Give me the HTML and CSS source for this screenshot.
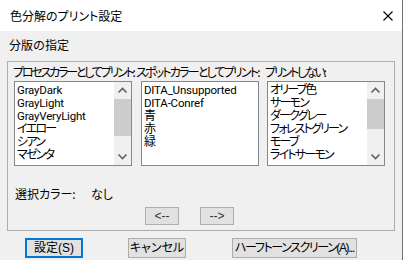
FILE: index.html
```html
<!DOCTYPE html>
<html lang="ja">
<head>
    <meta charset="UTF-8">
    <title>色分解のプリント設定</title>
    <link rel="stylesheet" href="styles.css">
</head>
<body>
    <div class="window">
        <div class="titleBar">
            <span class="title">色分解のプリント設定</span>
            <svg class="close" width="10" height="10" viewBox="0 0 10 10">
                <path d="M0.5 0.5 L9.5 9.5 M9.5 0.5 L0.5 9.5" stroke="#000" stroke-width="1.1" fill="none"/>
            </svg>
        </div>
        <div class="dialogBody">
            <div class="caption">分版の指定</div>
            <div class="groupBox">
                <div class="heads">
                    <span class="head1">プロセスカラーとしてプリント:</span>
                    <span class="head2">スポットカラーとしてプリント:</span>
                    <span class="head3">プリントしない:</span>
                </div>
                <div class="lists">
                    <div class="listBox">
                        <ul class="items">
                            <li>GrayDark</li>
                            <li>GrayLight</li>
                            <li>GrayVeryLight</li>
                            <li class="ja">イエロー</li>
                            <li class="ja">シアン</li>
                            <li class="ja">マゼンタ</li>
                        </ul>
                        <div class="scrollBar">
                            <div class="arrowBtn">
                                <svg width="17" height="17" viewBox="0 0 17 17"><polyline points="4.5,10.5 8.5,6.5 12.5,10.5" stroke="#606060" stroke-width="1.6" fill="none"/></svg>
                            </div>
                            <div class="track"><div class="thumb thumb1"></div></div>
                            <div class="arrowBtn">
                                <svg width="17" height="17" viewBox="0 0 17 17"><polyline points="4.5,6.5 8.5,10.5 12.5,6.5" stroke="#606060" stroke-width="1.6" fill="none"/></svg>
                            </div>
                        </div>
                    </div>
                    <div class="listBox">
                        <ul class="items">
                            <li>DITA_Unsupported</li>
                            <li>DITA-Conref</li>
                            <li class="ja">青</li>
                            <li class="ja">赤</li>
                            <li class="ja">緑</li>
                        </ul>
                    </div>
                    <div class="listBox">
                        <ul class="items">
                            <li class="ja">オリーブ色</li>
                            <li class="ja">サーモン</li>
                            <li class="ja">ダークグレー</li>
                            <li class="ja">フォレストグリーン</li>
                            <li class="ja">モーブ</li>
                            <li class="ja">ライトサーモン</li>
                        </ul>
                        <div class="scrollBar">
                            <div class="arrowBtn">
                                <svg width="17" height="17" viewBox="0 0 17 17"><polyline points="4.5,10.5 8.5,6.5 12.5,10.5" stroke="#606060" stroke-width="1.6" fill="none"/></svg>
                            </div>
                            <div class="track"><div class="thumb thumb3"></div></div>
                            <div class="arrowBtn">
                                <svg width="17" height="17" viewBox="0 0 17 17"><polyline points="4.5,6.5 8.5,10.5 12.5,6.5" stroke="#606060" stroke-width="1.6" fill="none"/></svg>
                            </div>
                        </div>
                    </div>
                </div>
                <div class="selectedRow">
                    <span class="selLabel">選択カラー:</span>
                    <span>なし</span>
                </div>
                <div class="moveRow">
                    <button class="btn moveBtn">&lt;--</button>
                    <button class="btn moveBtn">--&gt;</button>
                </div>
            </div>
            <div class="actions">
                <button class="btn okBtn">設定(S)</button>
                <button class="btn cancelBtn">キャンセル</button>
                <button class="btn halftoneBtn">ハーフトーンスクリーン(A)...</button>
            </div>
        </div>
    </div>
</body>
</html>
```

FILE: styles.css
```css
body{
    margin: 0;
    padding: 0;
    font-family: "Noto Sans CJK JP", "Liberation Sans", sans-serif;
    font-size: 12px;
    color: #000;
    background-color: #f0f0f0;
}
.window{
    width: 403px;
    height: 260px;
    box-sizing: border-box;
    border-right: 1px solid #6f6f6f;
    background-color: #f0f0f0;
    overflow: hidden;
}
.titleBar{
    height: 31px;
    background-color: #fff;
    display: flex;
    align-items: center;
    padding: 0 9px 0 10px;
}
.title{
    font-feature-settings: "palt";
    line-height: 15px;
}
.close{
    margin-left: auto;
}
.dialogBody{
    padding: 6px 0 0 7px;
}
.caption{
    line-height: 15px;
    margin-left: 2px;
    margin-bottom: 9px;
}
.groupBox{
    width: 388px;
    height: 170px;
    box-sizing: border-box;
    border: 1px solid #adadad;
    padding-top: 2px;
}
.heads{
    display: flex;
    padding-left: 5px;
    line-height: 15px;
    font-feature-settings: "palt";
    letter-spacing: -2.2px;
    white-space: nowrap;
}
.heads span{
    flex-shrink: 0;
}
.head1{
    width: 123px;
}
.head2{
    width: 129px;
    letter-spacing: -1.8px;
}
.lists{
    display: flex;
    margin-top: 2px;
    padding-left: 6px;
}
.listBox{
    width: 118px;
    height: 85px;
    box-sizing: border-box;
    border: 1px solid #828790;
    background-color: #fff;
    display: flex;
}
.listBox + .listBox{
    margin-left: 9px;
}
.listBox:last-child{
    margin-left: 8px;
}
.items{
    list-style: none;
    margin: 0;
    padding: 2px 0 0 2px;
    flex: 1;
    font-family: "Roboto", "Noto Sans CJK JP", sans-serif;
    font-size: 11.5px;
    letter-spacing: -0.2px;
    line-height: 13px;
    white-space: nowrap;
    overflow: hidden;
}
.items .ja{
    font-size: 12px;
    font-feature-settings: "palt";
    letter-spacing: -1.8px;
}
.scrollBar{
    width: 17px;
    background-color: #f0f0f0;
    display: flex;
    flex-direction: column;
}
.arrowBtn{
    height: 17px;
}
.arrowBtn svg{
    display: block;
}
.track{
    flex: 1;
}
.thumb{
    background-color: #cdcdcd;
}
.thumb1{
    height: 37px;
}
.thumb3{
    height: 30px;
}
.selectedRow{
    display: flex;
    margin-top: 20px;
    padding-left: 7px;
    line-height: 15px;
    font-feature-settings: "palt";
}
.selLabel{
    width: 76px;
}
.moveRow{
    display: flex;
    gap: 21px;
    margin-top: 6px;
    padding-left: 137px;
}
.btn{
    font-family: "Liberation Sans", "Noto Sans CJK JP", sans-serif;
    font-size: 12px;
    font-feature-settings: "palt";
    background-color: #e1e1e1;
    border: 1px solid #adadad;
    color: #000;
    padding: 0;
    margin: 0;
    height: 20px;
    line-height: 16px;
    box-sizing: border-box;
    white-space: nowrap;
}
.moveBtn{
    width: 34px;
    height: 18px;
    color: #333;
}
.actions{
    display: flex;
    margin-top: 7px;
    padding-left: 18px;
}
.okBtn{
    width: 58px;
    border: 2px solid #0078d7;
}
.cancelBtn{
    width: 58px;
    margin-left: 45px;
}
.halftoneBtn{
    width: 125px;
    margin-left: 46px;
    letter-spacing: -1.4px;
}
```
